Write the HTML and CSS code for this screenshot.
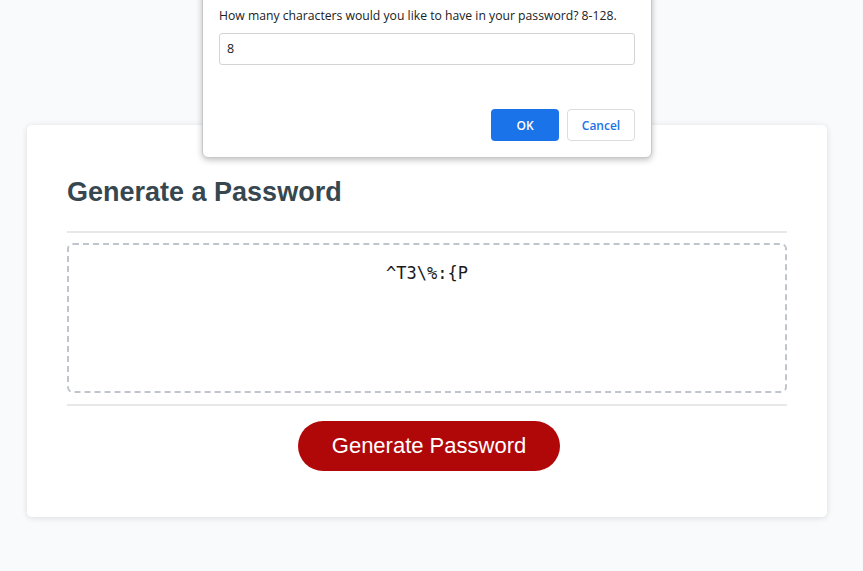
FILE: index.html
```html
<!DOCTYPE html>
<html lang="en">
<head>
<meta charset="utf-8">
<title>Password Generator</title>
<link rel="stylesheet" href="styles.css">
</head>
<body>
<main class="wrapper">
  <section class="card">
    <h2 class="card-title">Generate a Password</h2>
    <div class="card-body">
      <div class="password-box">^T3\%:{P</div>
    </div>
    <div class="card-footer">
      <button class="btn-generate" type="button">Generate Password</button>
    </div>
  </section>
</main>

<div class="dialog">
  <p class="dialog-msg">How many characters would you like to have in your password? 8-128.</p>
  <div class="dialog-input">8</div>
  <div class="dialog-actions">
    <button class="btn-ok" type="button">OK</button>
    <button class="btn-cancel" type="button">Cancel</button>
  </div>
</div>
</body>
</html>
```

FILE: styles.css
```css
html, body {
  margin: 0;
  padding: 0;
}

body {
  background: #f9fafb;
  font-family: "Liberation Sans", Arial, sans-serif;
  width: 863px;
  height: 571px;
  overflow: hidden;
}

.wrapper {
  padding: 125px 0 0 27px;
}

.card {
  width: 800px;
  box-sizing: border-box;
  background: #fff;
  border-radius: 5px;
  box-shadow: 0 1px 6px rgba(0, 0, 0, 0.12);
  padding: 0 40px 46px;
}

.card-title {
  margin: 0;
  padding: 51px 0 23px;
  font-size: 27px;
  line-height: 32px;
  font-weight: 700;
  color: #37474f;
  border-bottom: 2px solid #e8e8e8;
}

.card-body {
  padding: 10px 0 11px;
  border-bottom: 2px solid #e8e8e8;
}

.password-box {
  height: 150px;
  box-sizing: border-box;
  border: 2px dashed #c0c5cd;
  border-radius: 6px;
  padding-top: 17px;
  text-align: center;
  font-family: "DejaVu Sans Mono", "Liberation Mono", monospace;
  font-size: 17px;
  line-height: 22px;
  color: #1a1a1a;
}

.card-footer {
  display: flex;
  justify-content: center;
  padding-top: 15px;
}

.btn-generate {
  width: 262px;
  height: 50px;
  margin-left: 4px;
  border: none;
  border-radius: 25px;
  background: #b00808;
  color: #fff;
  font-family: "Liberation Sans", Arial, sans-serif;
  font-size: 22px;
  padding: 0;
}

/* prompt dialog */
.dialog {
  position: absolute;
  top: -10px;
  left: 202px;
  width: 450px;
  height: 168px;
  box-sizing: border-box;
  background: #fff;
  border: 1px solid #c8c8c8;
  border-radius: 0 0 6px 6px;
  box-shadow: 0 2px 6px rgba(0, 0, 0, 0.25);
  padding: 16px 16px 0 16px;
  font-family: "Open Sans", "Noto Sans", sans-serif;
}

.dialog-msg {
  margin: 0;
  font-size: 12.2px;
  line-height: 18px;
  color: #202124;
}

.dialog-input {
  margin-top: 8px;
  height: 32px;
  box-sizing: border-box;
  border: 1px solid #d4d4d4;
  border-radius: 3px;
  padding: 0 7px;
  font-size: 12.5px;
  line-height: 30px;
  color: #202124;
}

.dialog-actions {
  display: flex;
  justify-content: flex-end;
  gap: 8px;
  margin-top: 44px;
}

.dialog-actions button {
  width: 68px;
  height: 32px;
  border-radius: 4px;
  font-family: "Open Sans", "Noto Sans", sans-serif;
  font-size: 12px;
  font-weight: 600;
  padding: 0;
}

.btn-ok {
  background: #1a73e8;
  border: none;
  color: #fff;
}

.btn-cancel {
  background: #fff;
  border: 1px solid #dadce0;
  color: #1a73e8;
}
```
